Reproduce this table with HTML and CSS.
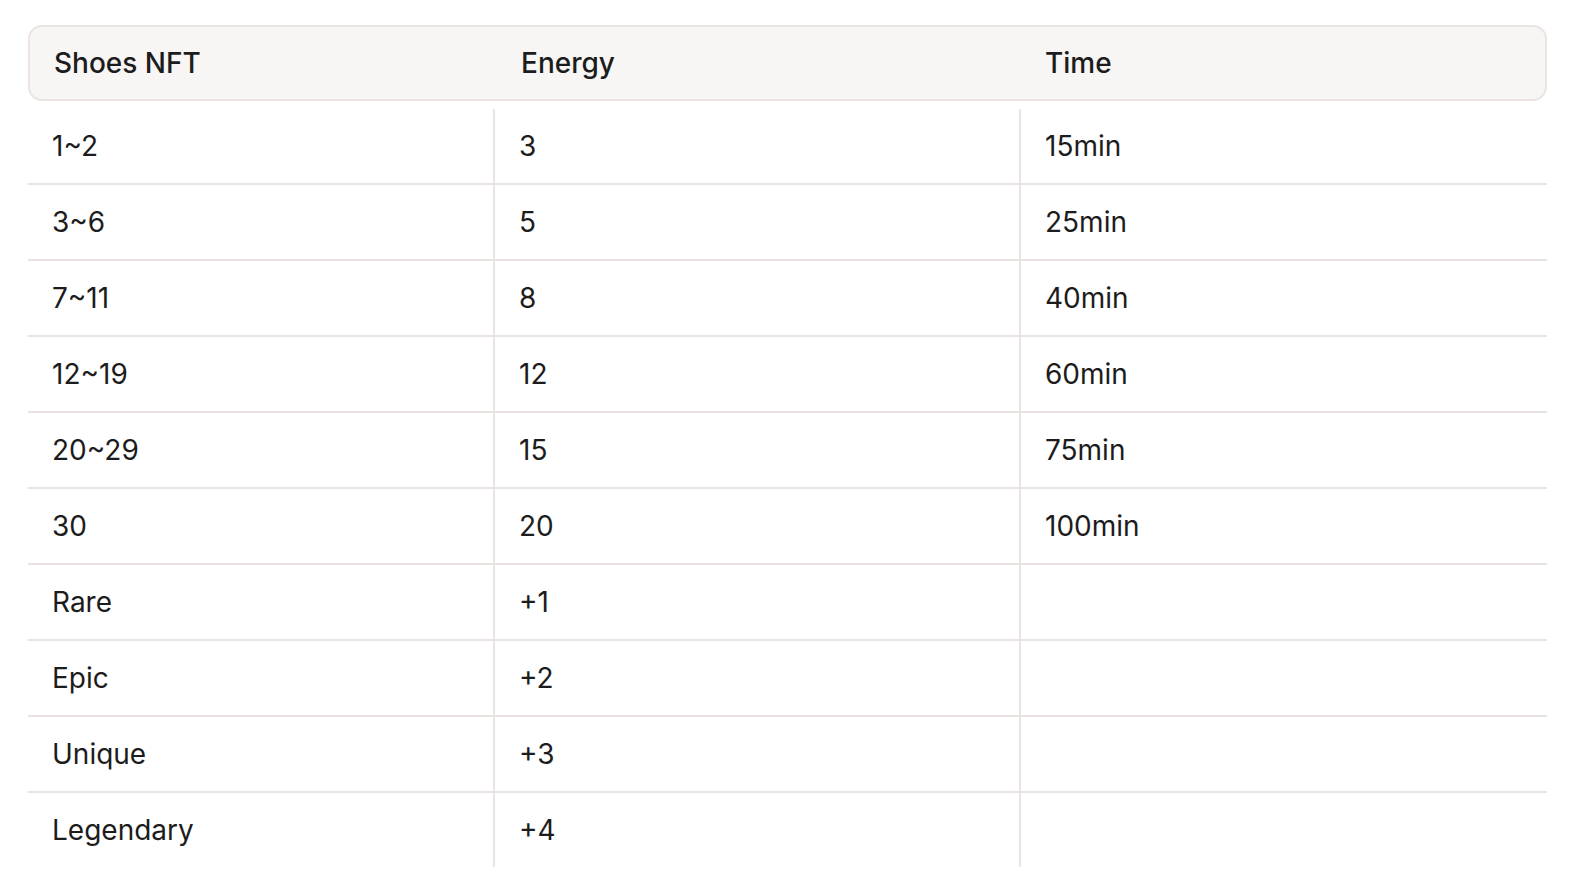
FILE: index.html
```html
<!DOCTYPE html>
<html lang="en">
<head>
<meta charset="utf-8">
<title>Shoes NFT Energy</title>
<link rel="stylesheet" href="styles.css">
</head>
<body>
<div class="page">
  <div class="table">
    <div class="thead">
      <div class="th">Shoes NFT</div>
      <div class="th">Energy</div>
      <div class="th">Time</div>
    </div>
    <div class="tbody">
      <div class="tr"><div class="td">1~2</div><div class="td">3</div><div class="td">15min</div></div>
      <div class="tr"><div class="td">3~6</div><div class="td">5</div><div class="td">25min</div></div>
      <div class="tr"><div class="td">7~11</div><div class="td">8</div><div class="td">40min</div></div>
      <div class="tr"><div class="td">12~19</div><div class="td">12</div><div class="td">60min</div></div>
      <div class="tr"><div class="td">20~29</div><div class="td">15</div><div class="td">75min</div></div>
      <div class="tr"><div class="td">30</div><div class="td">20</div><div class="td">100min</div></div>
      <div class="tr"><div class="td">Rare</div><div class="td">+1</div><div class="td"></div></div>
      <div class="tr"><div class="td">Epic</div><div class="td">+2</div><div class="td"></div></div>
      <div class="tr"><div class="td">Unique</div><div class="td">+3</div><div class="td"></div></div>
      <div class="tr"><div class="td">Legendary</div><div class="td">+4</div><div class="td"></div></div>
    </div>
  </div>
</div>
</body>
</html>
```

FILE: styles.css
```css
html, body {
  margin: 0;
  padding: 0;
  background: #ffffff;
}

.page {
  padding: 25px 27px 0 28px;
  font-family: Inter, "Noto Sans", sans-serif;
  color: #1d1c1c;
  font-size: 28px;
}

.table {
  display: flex;
  flex-direction: column;
  gap: 8px;
}

.thead {
  display: grid;
  grid-template-columns: 467px 524px 1fr;
  height: 76px;
  box-sizing: border-box;
  background: #f7f6f5;
  border: 2px solid #ebe4e3;
  border-radius: 14px;
  align-items: center;
}

.th {
  font-weight: 500;
  padding-left: 24px;
}

.tr {
  display: grid;
  grid-template-columns: 465px 526px 1fr;
  height: 76px;
  box-sizing: border-box;
  border-bottom: 2px solid #e9e4e2;
}

.tr:last-child {
  border-bottom: none;
  height: 74px;
}

.td {
  display: flex;
  align-items: center;
  padding-left: 24px;
  box-sizing: border-box;
}

.td + .td {
  border-left: 2px solid #e9e4e2;
}
```
